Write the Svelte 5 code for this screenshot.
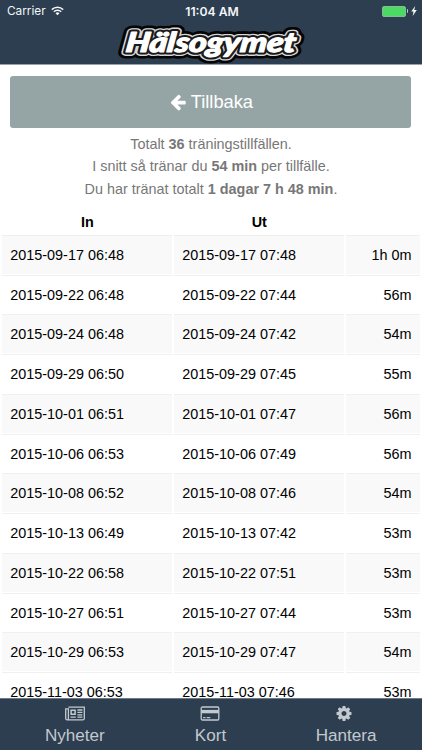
<script lang="ts">
  type Visit = { checkIn: string; checkOut: string; duration: string };

  const visits: Visit[] = [
    { checkIn: '2015-09-17 06:48', checkOut: '2015-09-17 07:48', duration: '1h 0m' },
    { checkIn: '2015-09-22 06:48', checkOut: '2015-09-22 07:44', duration: '56m' },
    { checkIn: '2015-09-24 06:48', checkOut: '2015-09-24 07:42', duration: '54m' },
    { checkIn: '2015-09-29 06:50', checkOut: '2015-09-29 07:45', duration: '55m' },
    { checkIn: '2015-10-01 06:51', checkOut: '2015-10-01 07:47', duration: '56m' },
    { checkIn: '2015-10-06 06:53', checkOut: '2015-10-06 07:49', duration: '56m' },
    { checkIn: '2015-10-08 06:52', checkOut: '2015-10-08 07:46', duration: '54m' },
    { checkIn: '2015-10-13 06:49', checkOut: '2015-10-13 07:42', duration: '53m' },
    { checkIn: '2015-10-22 06:58', checkOut: '2015-10-22 07:51', duration: '53m' },
    { checkIn: '2015-10-27 06:51', checkOut: '2015-10-27 07:44', duration: '53m' },
    { checkIn: '2015-10-29 06:53', checkOut: '2015-10-29 07:47', duration: '54m' },
    { checkIn: '2015-11-03 06:53', checkOut: '2015-11-03 07:46', duration: '53m' }
  ];

  // Logo lettering, painted from the outline inwards
  const logoLayers = ['shadow', 'rim', 'inner', 'face'];
</script>

<div class="app">
  <header class="top">
    <div class="status-bar">
      <div class="carrier">
        <span>Carrier</span>
        <svg class="wifi" viewBox="0 0 24 18" aria-hidden="true">
          <path d="M1.5 6.5a15 15 0 0 1 21 0M5.2 10.4a9.6 9.6 0 0 1 13.6 0" fill="none" stroke="currentColor" stroke-width="2.7" />
          <path d="M8.4 13.2a5.2 5.2 0 0 1 7.2 0L12 17z" fill="currentColor" />
        </svg>
      </div>
      <span class="clock">11:04 AM</span>
      <div class="power">
        <span class="battery"></span>
        <span class="battery-tip"></span>
        <svg class="bolt" viewBox="0 0 6 10" aria-hidden="true">
          <path d="M4.2 0 .2 5.6h2.3L1.7 10l4.1-5.9H3.3z" fill="currentColor" />
        </svg>
      </div>
    </div>
    <svg class="logo" viewBox="0 0 188 42" role="img" aria-label="Hälsogymet">
      <g transform="translate(8 30) skewX(-7)">
        {#each logoLayers as layer}
          <text class="logo-text {layer}" textLength="170" lengthAdjust="spacingAndGlyphs">Hälsogymet</text>
        {/each}
      </g>
    </svg>
  </header>

  <main class="content">
    <button class="back-btn">
      <svg class="arrow" viewBox="0 0 1792 1792" aria-hidden="true">
        <path fill="currentColor" d="M1664 896v128q0 53-32.5 90.5t-84.5 37.5h-704l293 294q38 36 38 90t-38 90l-75 76q-37 37-90 37-52 0-91-37l-651-652q-37-37-37-90 0-52 37-91l651-650q38-38 91-38 52 0 90 38l75 74q38 38 38 91t-38 91l-293 293h704q52 0 84.5 37.5t32.5 90.5z" />
      </svg>
      <span>Tillbaka</span>
    </button>

    <div class="summary">
      <p>Totalt <b>36</b> träningstillfällen.</p>
      <p>I snitt så tränar du <b>54 min</b> per tillfälle.</p>
      <p>Du har tränat totalt <b>1 dagar 7 h 48 min</b>.</p>
    </div>

    <div class="visits">
      <div class="row head">
        <span>In</span>
        <span>Ut</span>
        <span></span>
      </div>
      {#each visits as visit, i}
        <div class="row" class:odd={i % 2 === 0}>
          <span>{visit.checkIn}</span>
          <span>{visit.checkOut}</span>
          <span class="duration">{visit.duration}</span>
        </div>
      {/each}
    </div>
  </main>

  <nav class="tabs">
    <button class="tab">
      <svg class="tab-icon" viewBox="0 0 20 14" aria-hidden="true">
        <path d="M3.4.7h15.9v11.2a1.4 1.4 0 0 1-1.4 1.4H2.1a1.4 1.4 0 0 1-1.4-1.4V2.3h2.7v9.6a1.3 1.3 0 0 1-1.3 1.4" fill="none" stroke="currentColor" stroke-width="1.3" />
        <path d="M6.1 3.7h4v4h-4z" fill="none" stroke="currentColor" stroke-width="1.5" />
        <path d="M12.4 3.5h5M12.4 5.9h5M12.4 8.3h5M5.4 10.7h5.4M12.4 10.7h5" stroke="currentColor" stroke-width="1.3" />
      </svg>
      <span>Nyheter</span>
    </button>
    <button class="tab">
      <svg class="tab-icon" viewBox="0 0 20 14" aria-hidden="true">
        <rect x="1.2" y=".5" width="17.6" height="13" rx="1.2" fill="none" stroke="currentColor" stroke-width="1.3" />
        <path d="M1.2 3.4h17.6v3.4H1.2z" fill="currentColor" />
        <path d="M3.2 11.2h2.3M6.7 11.2h3.6" stroke="currentColor" stroke-width="1.3" />
      </svg>
      <span>Kort</span>
    </button>
    <button class="tab">
      <svg class="tab-icon cog" viewBox="128 128 1536 1536" aria-hidden="true">
        <path fill="currentColor" d="M1152 896q0-106-75-181t-181-75-181 75-75 181 75 181 181 75 181-75 75-181zm512-109v222q0 12-8 23t-20 13l-185 28q-19 54-39 91 35 50 107 138 10 12 10 25t-9 23q-27 37-99 108t-94 71q-12 0-26-9l-138-108q-44 23-91 38-16 136-29 186-7 28-36 28h-222q-14 0-24.5-8.5t-11.5-21.5l-28-184q-49-16-90-37l-141 107q-10 9-25 9-14 0-25-11-126-114-165-168-7-10-7-23 0-12 8-23 15-21 51-66.5t54-70.5q-27-50-41-99l-183-27q-13-2-21-12.5t-8-23.5v-222q0-12 8-23t19-13l186-28q14-46 39-92-40-57-107-138-10-12-10-24 0-10 9-23 26-36 98.5-107.5t94.5-71.5q13 0 26 10l138 107q44-23 91-38 16-136 29-186 7-28 36-28h222q14 0 24.5 8.5t11.5 21.5l28 184q49 16 90 37l142-107q9-9 24-9 13 0 25 10 129 119 165 170 7 8 7 22 0 12-8 23-15 21-51 66.5t-54 70.5q26 50 41 98l183 28q13 2 21 12.5t8 23.5z" />
      </svg>
      <span>Hantera</span>
    </button>
  </nav>
</div>

<style>
  :global(body) {
    margin: 0;
    background: #fff;
  }

  .app {
    display: flex;
    flex-direction: column;
    height: 750px;
    overflow: hidden;
    font-family: "Liberation Sans", Arial, sans-serif;
    color: #000;
  }

  .top {
    flex: none;
    box-sizing: border-box;
    height: 65px;
    background: #2c3e50;
    border-bottom: 1px solid #9aa2ab;
  }

  .status-bar {
    display: grid;
    grid-template-columns: 1fr auto 1fr;
    align-items: center;
    height: 22px;
    padding: 0 5px 0 7px;
    font-family: Inter, sans-serif;
    font-size: 11.8px;
    color: #f4f6f8;
  }

  .carrier {
    display: flex;
    align-items: center;
    gap: 5px;
  }

  .wifi {
    width: 13px;
    height: 10px;
  }

  .clock {
    font-size: 12.2px;
    font-weight: 600;
  }

  .power {
    display: flex;
    align-items: center;
    justify-content: flex-end;
  }

  .battery {
    box-sizing: border-box;
    width: 24px;
    height: 11px;
    background: #4cd964;
    border: 1px solid #82bd98;
    border-radius: 2px;
  }

  .battery-tip {
    width: 1.5px;
    height: 4px;
    margin-left: 1px;
    background: #c4cbd0;
    border-radius: 0 2px 2px 0;
  }

  .bolt {
    width: 6px;
    height: 10px;
    margin-left: 3px;
  }

  .logo {
    display: block;
    width: 188px;
    height: 42px;
    margin: 0 auto;
  }

  .logo-text {
    font-family: Lato, sans-serif;
    font-size: 27.5px;
    font-weight: 900;
    font-style: italic;
    stroke-linejoin: round;
  }

  .shadow {
    fill: #050505;
    stroke: #050505;
    stroke-width: 13px;
  }

  .rim {
    fill: #d8d8d8;
    stroke: #d8d8d8;
    stroke-width: 7.8px;
  }

  .inner {
    fill: #1c1a1b;
    stroke: #1c1a1b;
    stroke-width: 5.2px;
  }

  .face {
    fill: #fff;
    stroke: #fff;
    stroke-width: 1.2px;
  }

  .content {
    flex: 1;
    min-height: 0;
    overflow: hidden;
  }

  .back-btn {
    display: flex;
    align-items: center;
    justify-content: center;
    gap: 4px;
    width: 401px;
    height: 52px;
    margin: 11px 0 0 10.4px;
    padding: 0;
    background: #95a5a6;
    border: 0;
    border-radius: 3px;
    color: #fff;
    font: 18.3px "Liberation Sans", Arial, sans-serif;
  }

  .arrow {
    width: 18px;
    height: 18px;
  }

  .summary {
    margin-top: 5px;
    color: #777;
    font-size: 14.4px;
    line-height: 22.4px;
    text-align: center;
  }

  .summary p {
    margin: 0;
  }

  .visits {
    display: grid;
    row-gap: 1.8px;
    margin: 9px 2px 0 2.3px;
    font-size: 14.4px;
  }

  .row {
    display: grid;
    grid-template-columns: 170px 170px 1fr;
    column-gap: 2px;
    height: 37.95px;
  }

  .row span {
    box-sizing: border-box;
    padding: 0 8px;
    border-top: 1px solid #f0f0f0;
    line-height: 38px;
  }

  .row.odd span {
    background: #f9f9f9;
  }

  .row .duration {
    padding-right: 8.6px;
    text-align: right;
  }

  .head {
    height: 24px;
    font-weight: bold;
    text-align: center;
  }

  .row.head span {
    border-top: 0;
    line-height: 27px;
  }

  .tabs {
    flex: none;
    display: grid;
    grid-template-columns: repeat(3, 1fr);
    box-sizing: border-box;
    height: 52px;
    padding: 0 8px 0 7px;
    background: #2c3e50;
    border-top: 1px solid #6c7986;
  }

  .tab {
    display: flex;
    flex-direction: column;
    align-items: center;
    padding: 7px 0 0;
    background: none;
    border: 0;
    color: #c3c9cf;
    font: 17.1px/20px "Liberation Sans", Arial, sans-serif;
  }

  .tab-icon {
    width: 20px;
    height: 15px;
    margin-bottom: 5px;
  }

  .cog {
    margin-right: 4px;
  }
</style>
